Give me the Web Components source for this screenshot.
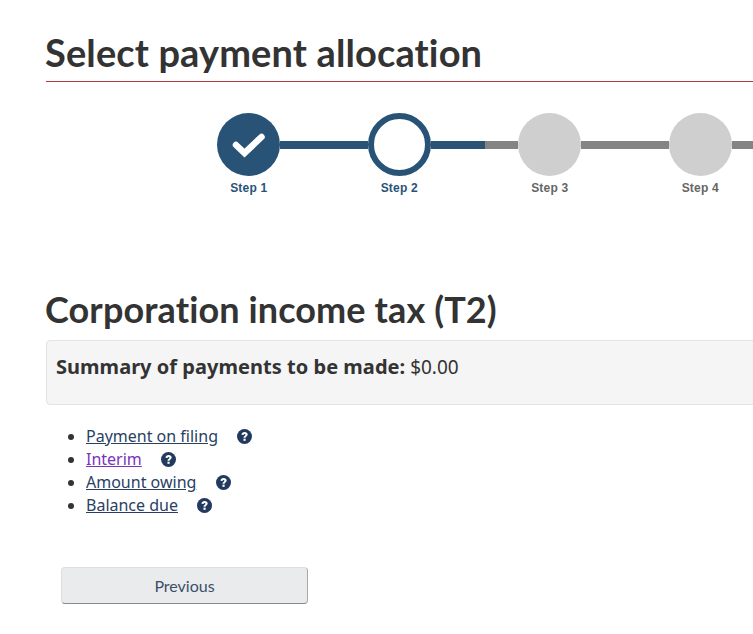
<!DOCTYPE html>
<html>
<head>
<meta charset="utf-8">
<title>Select payment allocation</title>
<style>
  html, body { margin: 0; height: 634px; overflow: hidden; background: #fff; }
  body { font-family: "Noto Sans", sans-serif; color: #333; }
</style>
</head>
<body>
<payment-page>
  <page-heading slot="title">Select payment allocation</page-heading>
  <step-bar slot="steps">
    <step-item state="done" line="done">Step 1</step-item>
    <step-item state="current" line="half">Step 2</step-item>
    <step-item line="todo">Step 3</step-item>
    <step-item line="todo">Step 4</step-item>
  </step-bar>
  <section-title slot="section">Corporation income tax (T2)</section-title>
  <summary-well slot="summary"><b>Summary of payments to be made:</b> <span>$0.00</span></summary-well>
  <payment-links slot="links">
    <payment-link>Payment on filing</payment-link>
    <payment-link visited>Interim</payment-link>
    <payment-link>Amount owing</payment-link>
    <payment-link>Balance due</payment-link>
  </payment-links>
  <nav-button slot="actions">Previous</nav-button>
</payment-page>
<script>
class PaymentPage extends HTMLElement {
  constructor() {
    super();
    this.attachShadow({mode: 'open'});
    this.shadowRoot.innerHTML = `
    <style>
      :host { display: flex; flex-direction: column; width: 707px; padding-left: 46px; overflow: hidden; }
      .title { display: block; padding-top: 29px; }
      .steps { display: block; padding: 31px 0 0 171px; }
      .section { display: block; padding-top: 91px; }
      .summary { display: block; padding-top: 9px; }
      .links { display: block; padding-top: 20px; }
      .actions { display: block; padding: 50px 0 0 15px; }
      ::slotted(summary-well), ::slotted(page-heading) { margin-right: -300px; }
    </style>
    <div class="title"><slot name="title"></slot></div>
    <div class="steps"><slot name="steps"></slot></div>
    <div class="section"><slot name="section"></slot></div>
    <div class="summary"><slot name="summary"></slot></div>
    <div class="links"><slot name="links"></slot></div>
    <div class="actions"><slot name="actions"></slot></div>
    `;
  }
}

class PageHeading extends HTMLElement {
  constructor() {
    super();
    this.attachShadow({mode: 'open'});
    this.shadowRoot.innerHTML = `
    <style>
      :host { display: block; font: 700 38px/46px Lato, sans-serif; font-variant-ligatures: none; letter-spacing: .13px; text-indent: -1px; color: #333; border-bottom: 1px solid #af3c43; padding-bottom: 6px; }
    </style>
    <slot></slot>
    `;
  }
}

class SectionTitle extends HTMLElement {
  constructor() {
    super();
    this.attachShadow({mode: 'open'});
    this.shadowRoot.innerHTML = `
    <style>
      :host { display: block; font: 700 36px/44px Lato, sans-serif; font-variant-ligatures: none; letter-spacing: .11px; text-indent: -1px; color: #333; }
    </style>
    <slot></slot>
    `;
  }
}

class StepBar extends HTMLElement {
  constructor() {
    super();
    this.attachShadow({mode: 'open'});
    this.shadowRoot.innerHTML = `
    <style>
      :host { display: flex; align-items: flex-start; }
    </style>
    <slot></slot>
    `;
  }
}

class StepItem extends HTMLElement {
  constructor() {
    super();
    this.attachShadow({mode: 'open'});
    const state = this.getAttribute('state') || 'todo';
    const line = this.getAttribute('line') || 'todo';
    const check = state === 'done'
      ? `<svg width="34" height="26" viewBox="0 0 34 26"><path d="M4 13 L12.5 21 L29.5 5" fill="none" stroke="#fff" stroke-width="6.5" stroke-linecap="round" stroke-linejoin="miter"/></svg>`
      : '';
    this.shadowRoot.innerHTML = `
    <style>
      :host { display: block; flex: none; width: 150.5px; }
      .row { display: flex; align-items: center; height: 63px; }
      .dot { flex: none; width: 63px; height: 63px; border-radius: 50%; box-sizing: border-box; display: flex; align-items: center; justify-content: center; }
      .done { background: #295376; }
      .current { background: #fff; border: 6px solid #295376; }
      .todo { background: #cfcfcf; }
      .line { flex: 1; height: 8px; background: #848484; }
      .line.done { background: #295376; }
      .line.half { background: linear-gradient(to right, #295376 54px, #848484 54px); }
      .label { box-sizing: border-box; width: 63px; padding: 4px 0 0 .5px; text-align: center; font: 700 12px/16px "Liberation Sans", sans-serif; letter-spacing: .2px; color: #666; }
      .label.blue { color: #295376; }
    </style>
    <div class="row">
      <div class="dot ${state}">${check}</div>
      <div class="line ${line}"></div>
    </div>
    <div class="label ${state === 'todo' ? '' : 'blue'}"><slot></slot></div>
    `;
  }
}

class SummaryWell extends HTMLElement {
  constructor() {
    super();
    this.attachShadow({mode: 'open'});
    this.shadowRoot.innerHTML = `
    <style>
      :host { display: block; box-sizing: border-box; height: 65px; padding: 13px 9px; background: #f5f5f5; border: 1px solid #e3e3e3; border-radius: 4px; font: 400 19px/26px "Noto Sans", sans-serif; color: #333; }
      ::slotted(b) { font-size: 20px; font-weight: 700; letter-spacing: .03px; }
    </style>
    <slot></slot>
    `;
  }
}

class PaymentLinks extends HTMLElement {
  constructor() {
    super();
    this.attachShadow({mode: 'open'});
    this.shadowRoot.innerHTML = `
    <style>
      :host { display: block; padding-left: 40px; }
    </style>
    <slot></slot>
    `;
  }
}

class PaymentLink extends HTMLElement {
  constructor() {
    super();
    this.attachShadow({mode: 'open'});
    this.shadowRoot.innerHTML = `
    <style>
      :host { display: list-item; list-style: disc; height: 23px; font: 400 16px/23px "Noto Sans", sans-serif; color: #333; }
      a { color: #284162; text-decoration: underline; }
      :host([visited]) a { color: #7834bc; }
      svg { margin-left: 15px; vertical-align: -2px; }
    </style>
    <a href="#"><slot></slot></a>
    <svg width="15" height="15" viewBox="0 0 16 16">
      <circle cx="8" cy="8" r="8" fill="#233a5f"/>
      <path d="M4.8 6 C4.9 4.2 6.3 3.2 8.1 3.2 C10 3.2 11.4 4.3 11.4 5.9 C11.4 7.8 9.2 7.9 9.2 9.4 L6.9 9.4 C6.9 7.2 9 7.1 9 6 C9 5.5 8.6 5.2 8.1 5.2 C7.5 5.2 7 5.6 7 6.4 Z" fill="#fff"/>
      <rect x="6.9" y="10.3" width="2.3" height="2.3" fill="#fff"/>
    </svg>
    `;
  }
}

class NavButton extends HTMLElement {
  constructor() {
    super();
    this.attachShadow({mode: 'open'});
    this.shadowRoot.innerHTML = `
    <style>
      :host { display: block; width: 247px; }
      button { display: block; box-sizing: border-box; width: 100%; height: 37px; padding: 0; background: #eaebed; border: 1px solid #dcdee1; border-bottom-color: #8a8a8a; border-right-color: #a8a8a8; border-radius: 4px; font: 400 16px/22px Lato, sans-serif; color: #3a5068; }
    </style>
    <button type="button"><slot></slot></button>
    `;
  }
}

customElements.define('payment-page', PaymentPage);
customElements.define('page-heading', PageHeading);
customElements.define('section-title', SectionTitle);
customElements.define('step-bar', StepBar);
customElements.define('step-item', StepItem);
customElements.define('summary-well', SummaryWell);
customElements.define('payment-links', PaymentLinks);
customElements.define('payment-link', PaymentLink);
customElements.define('nav-button', NavButton);
</script>
</body>
</html>
